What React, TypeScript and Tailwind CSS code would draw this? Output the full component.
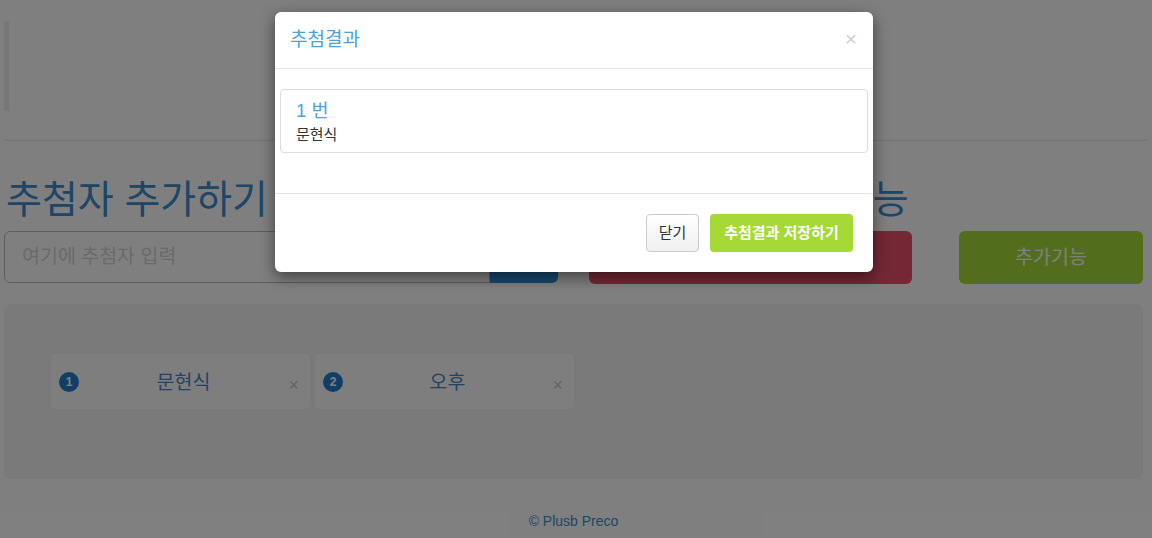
import React from "react";

const FONT = { fontFamily: '"Liberation Sans", "Noto Sans CJK KR", sans-serif' };

function Card({ n, name }: { n: number; name: string }) {
  return (
    <div className="relative flex h-[57px] w-[261px] items-center rounded-[3px] border border-[#f0f0f0] bg-[#fcfcfc]">
      <span className="ml-[8px] flex h-[20px] w-[20px] items-center justify-center rounded-full bg-[#1f7fd0] text-[12px] font-bold leading-none text-white">
        {n}
      </span>
      <span className="flex-1 pr-[22px] text-center text-[19.5px] leading-[24px] text-[#4a86c0]">{name}</span>
      <span className="absolute right-[11px] top-[21px] text-[18px] leading-[20px] text-[#c8c8c8]">×</span>
    </div>
  );
}

export default function App() {
  return (
    <div className="relative h-[538px] w-[1152px] overflow-hidden bg-white" style={FONT}>
      {/* Page content */}
      <div className="pl-[4px] pr-[9px]">
        <div className="mt-[21px] h-[90px] w-[5px] bg-[#eeeeee]" />
        <div className="mt-[29px] mr-[-5px] h-px bg-[#e6e6e6]" />
        <div className="mt-[39px] flex gap-[31px]">
          <h1 className="w-[554px] pl-[2px] text-[39px] leading-[40px] text-[#3d8ccc]">추첨자 추가하기</h1>
          <h1 className="w-[554px] text-[39px] leading-[40px] text-[#3d8ccc]">추첨하기 / 추가기능</h1>
        </div>
        <div className="mt-[11px] flex gap-[31px]">
          <div className="flex h-[52px] w-[554px]">
            <div className="flex flex-1 items-center rounded-l-[6px] border border-[#bbbbbb] pl-[17px] text-[19.5px] text-[#d4d4d4]">
              여기에 추첨자 입력
            </div>
            <div className="flex w-[68px] items-center justify-center rounded-r-[6px] bg-[#3190dc] text-[18px] text-white">추가</div>
          </div>
          <div className="flex w-[554px] gap-[47px]">
            <div className="flex h-[53px] w-[323px] items-center justify-center rounded-[6px] bg-[#e8506a] text-[19.5px] text-white">
              추첨하기
            </div>
            <div className="flex h-[53px] w-[184px] items-center justify-center rounded-[6px] bg-[#a4dc3a] text-[19.5px] text-white">
              추가기능
            </div>
          </div>
        </div>
        <div className="mt-[20px] h-[175px] rounded-[6px] bg-[#f5f5f5] pl-[46px] pt-[49px]">
          <div className="flex gap-[3px]">
            <Card n={1} name="문현식" />
            <Card n={2} name="오후" />
          </div>
        </div>
        <div className="mt-[34px] text-center text-[14px] leading-[16px] text-[#3d8ccc]">© Plusb Preco</div>
      </div>

      {/* Backdrop */}
      <div className="absolute inset-0 bg-black/50" />

      {/* Modal */}
      <div className="absolute left-[275px] top-[12px] w-[598px] rounded-[6px] bg-white shadow-[0_5px_15px_rgba(0,0,0,0.5)]">
        <div className="relative flex h-[57px] items-center border-b border-[#e5e5e5] px-[15px]">
          <h4 className="text-[19px] leading-[26px] text-[#4aa3df]">추첨결과</h4>
          <span className="absolute right-[16px] top-[15px] text-[21px] leading-[24px] text-[#cfcfcf]">×</span>
        </div>
        <div className="px-[5px] py-[20px]">
          <div className="mb-[20px] rounded-[4px] border border-[#dddddd] px-[15px] pb-[7px] pt-[11px]">
            <div className="mb-[4px] text-[18.5px] leading-[20px] text-[#4aa3df]">1 번</div>
            <div className="text-[15px] leading-[20px] text-[#333333]">문현식</div>
          </div>
        </div>
        <div className="flex justify-end border-t border-[#e5e5e5] p-[20px]">
          <button className="h-[38px] w-[53px] rounded-[4px] border border-[#cccccc] bg-gradient-to-b from-white to-[#f0f0f0] text-[15px] text-[#333333]">
            닫기
          </button>
          <button className="ml-[11px] h-[38px] w-[143px] rounded-[4px] bg-[#a4d936] text-[15px] font-bold text-white">
            추첨결과 저장하기
          </button>
        </div>
      </div>
    </div>
  );
}
